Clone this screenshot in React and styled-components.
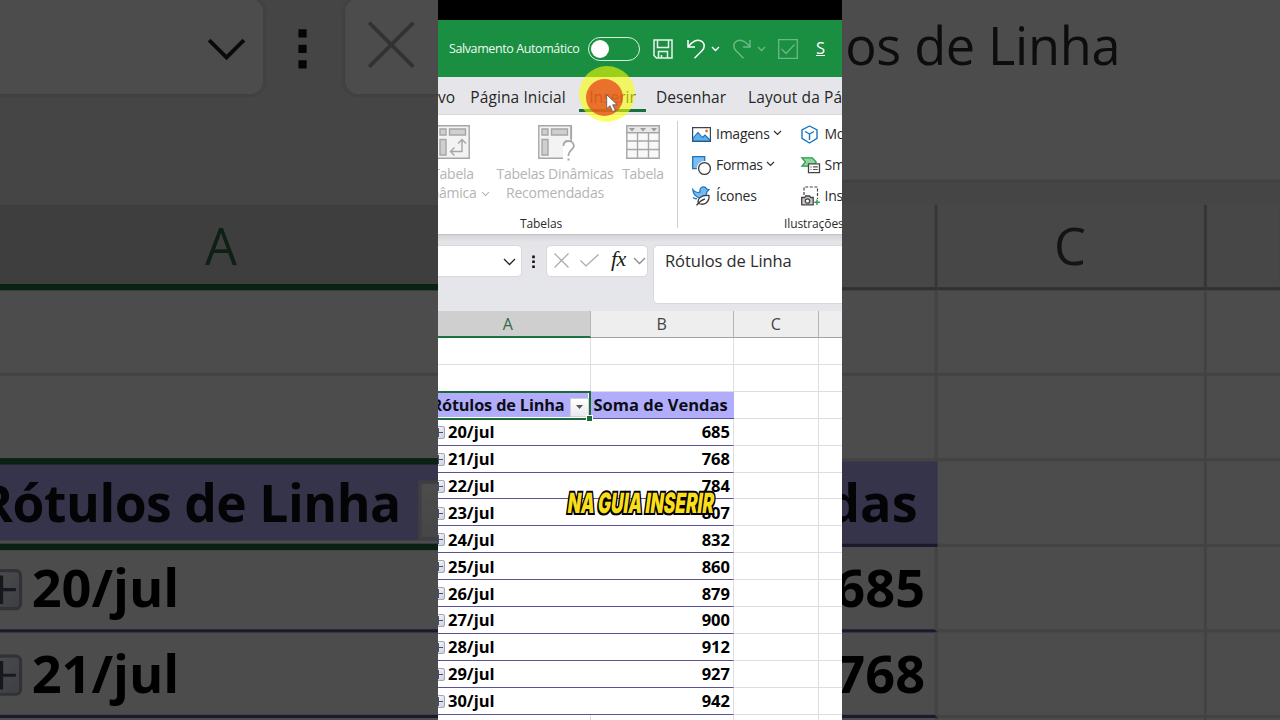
import React from "react";
import styled, { createGlobalStyle, css } from "styled-components";

const GlobalStyle = createGlobalStyle`
  * {
    box-sizing: border-box;
  }
  body {
    margin: 0;
    background: #000;
    font-family: "Open Sans", "Noto Sans", sans-serif;
    overflow: hidden;
  }
  svg {
    display: block;
    flex: none;
    overflow: visible;
  }
`;

const Stage = styled.div`
  display: grid;
  grid-template: 720px / 1280px;
  justify-items: center;
  overflow: hidden;
`;

const Backdrop = styled.div`
  grid-area: 1 / 1;
  width: 1280px;
  height: 720px;
  overflow: hidden;
  filter: brightness(0.3);
`;

const Magnified = styled.div`
  width: 404px;
  margin-top: -36px;
  background: #e5e6e9;
  transform: scale(3.168);
  transform-origin: 0 0;
`;

const Video = styled.div`
  grid-area: 1 / 1;
  position: relative;
  display: flex;
  flex-direction: column;
  width: 404px;
  height: 720px;
  overflow: hidden;
  background: #fff;
`;

const Letterbox = styled.div`
  flex: none;
  height: 20px;
  background: #000;
`;

const Text = styled.span`
  flex: none;
  white-space: nowrap;
  line-height: 1;
  font-size: ${(p) => p.$size}px;
  font-weight: ${(p) => p.$weight || 400};
  letter-spacing: ${(p) => p.$track || 0}px;
  color: ${(p) => p.$color || "#262626"};
`;

/* ---------- title bar ---------- */

const TitleBar = styled.div`
  flex: none;
  display: flex;
  align-items: center;
  height: 57px;
  padding-left: 11px;
  background: #1a8f42;
`;

const AutoSave = styled.div`
  flex: none;
  display: flex;
  width: 138.5px;
  padding-top: 1px;
`;

const Toggle = styled.div`
  flex: none;
  width: 52px;
  height: 24px;
  margin-right: 13px;
  padding: 2px;
  border: 1.5px solid #d9f0df;
  border-radius: 12px;
  &::before {
    content: "";
    display: block;
    width: 18px;
    height: 18px;
    border-radius: 50%;
    background: #fff;
  }
`;

const QuickAction = styled.div`
  flex: none;
  display: flex;
  width: ${(p) => p.$width}px;
  opacity: ${(p) => (p.$disabled ? 0.36 : 1)};
`;

const StrikeButton = styled(Text)`
  padding-bottom: 1px;
  line-height: 13px;
  border-bottom: 1.5px solid #fff;
`;

/* ---------- tabs ---------- */

const TabBar = styled.div`
  flex: none;
  display: flex;
  height: 38px;
  background: #e6e6ea;
  border-bottom: 1px solid #d8d8dc;
`;

const Tab = styled.div`
  flex: none;
  display: flex;
  align-items: center;
  justify-content: ${(p) => p.$align || "center"};
  width: ${(p) => p.$width}px;
  height: 35px;
  padding: 9px ${(p) => p.$right || 0}px 0 ${(p) => p.$left || 0}px;
  border-bottom: 3px solid ${(p) => (p.$active ? "#18703a" : "transparent")};
`;

/* ---------- ribbon ---------- */

const RibbonBar = styled.div`
  flex: none;
  display: flex;
  height: 120px;
  padding-top: 6px;
  background: #fff;
  border-bottom: 1px solid #c4c4c8;
`;

const Group = styled.div`
  flex: none;
  display: flex;
  flex-direction: column;
  width: ${(p) => p.$width}px;
  height: 107px;
  border-right: ${(p) => (p.$divided ? "1px solid #cfcfcf" : "none")};
`;

const GroupLabel = styled.div`
  margin-top: auto;
  padding: 2px 0 0 ${(p) => p.$indent}px;
  height: 12px;
  display: flex;
  align-items: flex-start;
`;

const BigButtons = styled.div`
  display: flex;
  padding-top: 4px;
  margin-left: -28px;
`;

const BigButton = styled.div`
  flex: none;
  display: flex;
  flex-direction: column;
  align-items: center;
  width: ${(p) => p.$width}px;
`;

const BigLine = styled.div`
  display: flex;
  align-items: center;
  gap: 5px;
  height: 19.5px;
`;

const BigIcon = styled.div`
  height: 39px;
`;

const SmallColumns = styled.div`
  display: grid;
  grid-template-columns: 108.5px 56px;
  grid-auto-rows: 31px;
  padding-left: 14px;
  margin-top: -2.5px;
`;

const SmallButton = styled.div`
  display: flex;
  align-items: center;
  span + svg {
    margin: -2px 0 0 4px;
  }
`;

const SmallIcon = styled.div`
  flex: none;
  width: 24px;
`;

/* ---------- formula bar ---------- */

const FormulaBar = styled.div`
  flex: none;
  display: flex;
  align-items: flex-start;
  height: 76px;
  padding-top: 10px;
  background: linear-gradient(#d4d4d8, #e5e5e9 7px, #e5e6e9);
`;

const box = css`
  flex: none;
  display: flex;
  align-items: center;
  height: 32px;
  background: #fff;
  border: 1px solid #d8d8dc;
`;

const NameBox = styled.div`
  ${box}
  width: 83.5px;
  border-left: none;
  border-radius: 0 5px 5px 0;
  justify-content: flex-end;
  padding: 1px 6px 0 0;
`;

const Dots = styled.div`
  flex: none;
  display: flex;
  justify-content: center;
  width: 24.5px;
  padding-top: 9.5px;
`;

const EditBox = styled.div`
  ${box}
  width: 102px;
  border-radius: 5px;
  padding: 0 0 1px 6.5px;
`;

const Fx = styled.span`
  margin: -3px 0 0 12px;
  width: 23px;
  font: italic 22px/1 "Liberation Serif", serif;
  letter-spacing: -0.5px;
  color: #1c1c1c;
`;

const FormulaInput = styled.div`
  ${box}
  align-items: flex-start;
  width: 200px;
  height: 59px;
  margin-left: 5px;
  padding: 6.7px 0 0 11px;
  border-radius: 5px;
`;

/* ---------- sheet ---------- */

const Grid = styled.div`
  flex: none;
  display: grid;
  grid-template-columns: 152.5px 143.5px 84.5px 24px;
  grid-auto-rows: 26.92px;
  grid-template-rows: 27px;
  background: #fff;
`;

const ColumnHead = styled.div`
  display: flex;
  align-items: center;
  justify-content: center;
  padding: ${(p) => (p.$active ? "1.5px 12px 0 0" : "0.5px 0 0")};
  background: ${(p) => (p.$active ? "#cfcfcf" : "#eeeeee")};
  border-right: 1px solid #b5b5b5;
  border-bottom: ${(p) => (p.$active ? "2px solid #1f7040" : "1px solid #a3a3a3")};
`;

const Cell = styled.div`
  display: flex;
  align-items: center;
  min-width: 0;
  border-right: 1px solid #dedee0;
  border-bottom: 1px solid #dedee0;
`;

const PivotCell = styled(Cell)`
  justify-content: ${(p) => (p.$number ? "flex-end" : "flex-start")};
  padding: 1.4px ${(p) => (p.$number ? 3 : 0)}px 0 0;
  border-right: ${(p) => (p.$number ? "1px solid #dedee0" : "none")};
  border-bottom-color: #5a5296;
`;

const PivotHead = styled(PivotCell)`
  padding: 0 0 0 3px;
  background: #b1adfb;
`;

const SelectedHead = styled(PivotHead)`
  position: relative;
  z-index: 1;
  justify-content: flex-end;
  padding: 0;
  margin: -1px -0.5px -1px 0;
  border: 2px solid #1d6a3c;
  border-left: none;
  box-shadow: inset 0 -1px #fff, inset -1px 0 #fff;
`;

const FilterButton = styled.div`
  flex: none;
  align-self: flex-end;
  display: flex;
  align-items: center;
  justify-content: center;
  width: 19.5px;
  height: 19px;
  margin: 0 0 1px 5px;
  background: linear-gradient(#fff, #e9eaf0);
  border: 1px solid #d2d2dc;
`;

const FillHandle = styled.div`
  position: absolute;
  right: -3px;
  bottom: -3px;
  width: 5px;
  height: 5px;
  background: #1d6a3c;
  outline: 1px solid #fff;
`;

const Expander = styled.div`
  flex: none;
  display: grid;
  place-items: center;
  width: 12px;
  height: 13px;
  margin: 0 3.5px 0 -5.5px;
  background: linear-gradient(135deg, #fff, #ccd1e2);
  border: 1px solid #a3a8b6;
  border-radius: 2px;
`;

/* ---------- overlays ---------- */

const Halo = styled.div`
  position: absolute;
  left: 141px;
  top: 66px;
  width: 56px;
  height: 56px;
  border-radius: 50%;
  background: rgba(250, 255, 0, 0.58);
`;

const ClickDot = styled.div`
  position: absolute;
  left: 148px;
  top: 79px;
  width: 37px;
  height: 37px;
  border-radius: 50%;
  background: rgba(230, 66, 26, 0.74);
`;

const Pointer = styled.div`
  position: absolute;
  left: 168px;
  top: 94px;
`;

const Caption = styled.div`
  position: absolute;
  left: 130px;
  top: 488px;
  font: 900 28px/30px Inter, sans-serif;
  white-space: nowrap;
  color: #f9de1c;
  -webkit-text-stroke: 4px #000;
  paint-order: stroke fill;
  transform: scaleX(0.615) skewX(-12deg);
  transform-origin: 0 50%;
  text-shadow: -2px 2px #000, 2px 2px #000;
`;

const Chevron = ({ width = 8, color = "#333", stroke = 1.2 }) => (
  <svg width={width} height={width / 2} viewBox="0 0 8 4">
    <path d="M0 0 4 4 8 0" fill="none" stroke={color} strokeWidth={stroke} />
  </svg>
);

const SaveIcon = () => (
  <svg width="20" height="20" viewBox="0 0 20 20" fill="none" stroke="#e6f6ea" strokeWidth="1.5">
    <path d="M1 1h18v18H3.5L1 16.5z" />
    <path d="M4.5 1v7.500h11V1M5.500 19v-6.500h9V19M8.500 19v-3" />
  </svg>
);

const UndoIcon = () => (
  <svg width="18" height="20" viewBox="0 0 18 20" fill="none" stroke="#fff" strokeWidth="1.5">
    <path d="M1 1v7h7M1.200 7.800C4 4 7 1.200 11 1.200c4 0 6.200 3 6.200 5.800 0 2-.8 3.400-2.200 4.800L7.500 19.300" />
  </svg>
);

const RedoIcon = () => (
  <svg width="18" height="20" viewBox="0 0 18 20" fill="none" stroke="#fff" strokeWidth="1.5">
    <path d="M17 1v7h-7M16.800 7.800C14 4 11 1.200 7 1.200 3 1.200.8 4.200.8 7c0 2 .8 3.400 2.200 4.800l7.500 7.500" />
  </svg>
);

const CheckBoxIcon = () => (
  <svg width="20" height="20" viewBox="0 0 20 20" fill="none" stroke="#fff" strokeWidth="1.3">
    <path d="M.7.700h18.600v18.600H.7zM3.500 10l4.500 4.500 8.500-9" />
  </svg>
);

const PivotBase = () => (
  <>
    <path d="M.8.800h32.400v32.400H.8z" fill="#f3f3f3" />
    <path d="M4 4h6v6H4zM13.500 4h16v6h-16zM4 14.500h6V30H4z" fill="#cfcfcf" />
  </>
);

const PivotIcon = () => (
  <svg width="34" height="34" viewBox="0 0 34 34" fill="none" stroke="#a6a6a6" strokeWidth="1.4">
    <PivotBase />
    <path d="M26 15v11.500H15M22 18.500l4-4 4 4M18.500 22.500l-4 4 4 4" />
  </svg>
);

const PivotHelpIcon = () => (
  <svg width="34" height="34" viewBox="0 0 34 34" fill="none" stroke="#a6a6a6" strokeWidth="1.4">
    <PivotBase />
    <path d="M25 16h10v19H25z" fill="#fff" stroke="none" />
    <path d="M33.200.8V14M25.500 21c0-3 2-5 5-5s5.300 2 5.300 5c0 3.500-5.300 4.500-5.300 9v1" strokeWidth="1.8" />
    <path d="M30.500 33.500v2" strokeWidth="2" />
  </svg>
);

const TableIcon = () => (
  <svg width="34" height="34" viewBox="0 0 34 34" fill="none" stroke="#a6a6a6" strokeWidth="1.4">
    <path d="M.8.800h32.400v32.400H.8z" fill="#f8f8f8" />
    <path d="M.8.800h32.400v7H.8z" fill="#e6e6e6" />
    <path d="M.8 16h32.400M.8 24.500h32.400M11.500 8v25M22.500 8v25" />
    <path d="m3 3 3 3.500L9 3zM14 3l3 3.500L20 3zM25 3l3 3.500L31 3z" fill="#9b9b9b" stroke="none" />
  </svg>
);

const PictureIcon = () => (
  <svg width="19" height="15" viewBox="0 0 19 15">
    <path d="M.6.600h17.800v13.800H.6z" fill="#fff" stroke="#3b4450" strokeWidth="1.2" />
    <path d="M1 11 6 5.500l4.500 5L13 8l5 5v1H1z" fill="#5fb0ea" stroke="#1b6fb5" strokeWidth="1.1" />
    <circle cx="14.5" cy="4" r="1.4" fill="#e2702c" />
  </svg>
);

const ShapesIcon = () => (
  <svg width="19" height="19" viewBox="0 0 19 19">
    <path d="M.7.700h12v12H.7z" fill="#7fbdf0" stroke="#1b75bc" strokeWidth="1.3" />
    <circle cx="12.5" cy="12.5" r="7.6" fill="#fff" />
    <circle cx="12.5" cy="12.5" r="5.9" fill="#fff" stroke="#3a3a3a" strokeWidth="1.3" />
  </svg>
);

const IconsIcon = () => (
  <svg width="19" height="20" viewBox="0 0 19 20">
    <path
      d="M.8 3.500C2.500 6 5.500 7 8 6 7.300 3 9 .8 11.500.8c1.800 0 2.700 1 3 2.300l2.500.5-2 2.200c-.3 3-2 5-4.500 6C6.500 13 1 9.500.8 3.500z"
      fill="#74b8ee"
      stroke="#1b75bc"
      strokeWidth="1.2"
    />
    <path d="M1 11.500c1 1 2.500 1.500 4 1.200" fill="none" stroke="#1b75bc" strokeWidth="1.2" />
    <path
      d="M6.500 17.500C5 13 8.500 9 17 9.500c.5 6-4 10.500-10.500 8z"
      fill="#fff"
      stroke="#3a3a3a"
      strokeWidth="1.3"
    />
    <path d="M4.500 19.300C7 16 9.500 14 13 12.800" fill="none" stroke="#3a3a3a" strokeWidth="1.3" />
  </svg>
);

const CubeIcon = () => (
  <svg width="17" height="19" viewBox="0 0 17 19" fill="#fff" stroke="#1b75bc" strokeWidth="1.4" strokeLinejoin="round">
    <path d="M8.500 1 16 4.800v8.600L8.500 18 1 13.400V4.800z" />
    <path d="M4 6.500 8.500 9v6M8.500 9l4.500-2.500" fill="none" />
  </svg>
);

const SmartArtIcon = () => (
  <svg width="19" height="17" viewBox="0 0 19 17">
    <path d="M.8.800h10.500l4 4.200-3.500 4.200H.8L4.500 5z" fill="#8ed6a0" stroke="#2b9a4d" strokeWidth="1.2" />
    <path d="M7.500 6.800h11v8.800h-11z" fill="#fff" stroke="#444" strokeWidth="1.3" />
    <path d="M9.500 9.800h1M12 9.800h4.800M9.500 12.500h1M12 12.500h4.800" stroke="#555" strokeWidth="1.2" />
  </svg>
);

const ScreenshotIcon = () => (
  <svg width="19" height="20" viewBox="0 0 19 20" fill="none">
    <path d="M3 9V1h13.500v12" stroke="#444" strokeWidth="1.2" strokeDasharray="3 1.6" />
    <path d="M.7 11.500h3l1-1.500h4l1 1.500h2.500v7.300H.7z" fill="#c9c9c9" stroke="#444" strokeWidth="1.3" />
    <circle cx="6.5" cy="15" r="2.2" fill="#fff" stroke="#444" strokeWidth="1.3" />
    <path d="M16 13.500v5.500M13.300 16.200h5.500" stroke="#2b9a4d" strokeWidth="1.4" />
  </svg>
);

const CancelIcon = styled.svg`
  margin-right: 11.5px;
`;

const INK = "#2b2b2b";
const MUTED = "#b4b4b4";

const Formula = () => (
  <FormulaBar>
    <NameBox>
      <Chevron width={11} color="#222" stroke={0.9} />
    </NameBox>
    <Dots>
      <svg width="3" height="14" viewBox="0 0 3 14">
        <path d="M.2.600h2.600v2.600H.2zM.2 5.500h2.600v2.600H.2zM.2 10.400h2.600V13H.2z" fill="#111" />
      </svg>
    </Dots>
    <EditBox>
      <CancelIcon width="15" height="15" viewBox="0 0 15 15">
        <path d="m.5.500 14 14m0-14-14 14" stroke="#a8a8a8" strokeWidth="1.2" />
      </CancelIcon>
      <svg width="19" height="13" viewBox="0 0 19 13">
        <path d="m.5 6.500 5.500 5.500L18.500.500" fill="none" stroke="#a8a8a8" strokeWidth="1.2" />
      </svg>
      <Fx>fx</Fx>
      <Chevron width={11} color="#8a8a8a" stroke={0.9} />
    </EditBox>
    <FormulaInput>
      <Text $size={16.5} $track={-0.1} $color={INK}>Rótulos de Linha</Text>
    </FormulaInput>
  </FormulaBar>
);

const SALES = [
  ["20/jul", 685],
  ["21/jul", 768],
  ["22/jul", 784],
  ["23/jul", 807],
  ["24/jul", 832],
  ["25/jul", 860],
  ["26/jul", 879],
  ["27/jul", 900],
  ["28/jul", 912],
  ["29/jul", 927],
  ["30/jul", 942],
];

const Blank = ({ count }) => Array.from({ length: count }, (_, i) => <Cell key={i} />);

const Sheet = ({ rows }) => (
  <Grid>
    <ColumnHead $active>
      <Text $size={16} $color="#2f6b47">A</Text>
    </ColumnHead>
    <ColumnHead>
      <Text $size={16} $color="#444">B</Text>
    </ColumnHead>
    <ColumnHead>
      <Text $size={16} $color="#444">C</Text>
    </ColumnHead>
    <ColumnHead />
    <Blank count={8} />
    <SelectedHead>
      <Text $size={16.3} $track={-0.15} $weight={700} $color="#0d0d16">Rótulos de Linha</Text>
      <FilterButton>
        <svg width="7" height="4" viewBox="0 0 7 4">
          <path d="M0 0h7L3.500 4z" fill="#555" />
        </svg>
      </FilterButton>
      <FillHandle />
    </SelectedHead>
    <PivotHead>
      <Text $size={16.5} $weight={700} $color="#0d0d16">Soma de Vendas</Text>
    </PivotHead>
    <Blank count={2} />
    {rows.map(([day, total]) => (
      <React.Fragment key={day}>
        <PivotCell>
          <Expander>
            <svg width="9" height="9" viewBox="0 0 9 9">
              <path d="M0 4.500h9M4.500 0v9" stroke="#4a5068" strokeWidth="1" />
            </svg>
          </Expander>
          <Text $size={16.5} $weight={700} $color="#000">{day}</Text>
        </PivotCell>
        <PivotCell $number>
          <Text $size={16.5} $weight={700} $color="#000">{total}</Text>
        </PivotCell>
        <Blank count={2} />
      </React.Fragment>
    ))}
    <Blank count={4} />
  </Grid>
);

const Ribbon = () => (
  <RibbonBar>
    <Group $width={240} $divided>
      <BigButtons>
        <BigButton $width={86}>
          <BigIcon>
            <PivotIcon />
          </BigIcon>
          <BigLine>
            <Text $size={14} $track={-0.25} $color={MUTED}>Tabela</Text>
          </BigLine>
          <BigLine>
            <Text $size={14} $track={-0.25} $color={MUTED}>Dinâmica</Text>
            <Chevron width={7} color="#aaa" />
          </BigLine>
        </BigButton>
        <BigButton $width={118}>
          <BigIcon>
            <PivotHelpIcon />
          </BigIcon>
          <BigLine>
            <Text $size={14} $track={-0.25} $color={MUTED}>Tabelas Dinâmicas</Text>
          </BigLine>
          <BigLine>
            <Text $size={14} $track={-0.2} $color={MUTED}>Recomendadas</Text>
          </BigLine>
        </BigButton>
        <BigButton $width={58}>
          <BigIcon>
            <TableIcon />
          </BigIcon>
          <BigLine>
            <Text $size={14} $track={-0.25} $color={MUTED}>Tabela</Text>
          </BigLine>
        </BigButton>
      </BigButtons>
      <GroupLabel $indent={82}>
        <Text $size={12} $track={-0.1} $color={INK}>Tabelas</Text>
      </GroupLabel>
    </Group>
    <Group $width={164}>
      <SmallColumns>
        <SmallButton>
          <SmallIcon><PictureIcon /></SmallIcon>
          <Text $size={14} $track={-0.25} $color={INK}>Imagens</Text>
          <Chevron width={7} stroke={1.4} />
        </SmallButton>
        <SmallButton>
          <SmallIcon><CubeIcon /></SmallIcon>
          <Text $size={14} $track={-0.25} $color={INK}>Mo</Text>
        </SmallButton>
        <SmallButton>
          <SmallIcon><ShapesIcon /></SmallIcon>
          <Text $size={14} $track={-0.35} $color={INK}>Formas</Text>
          <Chevron width={7} stroke={1.4} />
        </SmallButton>
        <SmallButton>
          <SmallIcon><SmartArtIcon /></SmallIcon>
          <Text $size={14} $track={-0.25} $color={INK}>Sm</Text>
        </SmallButton>
        <SmallButton>
          <SmallIcon><IconsIcon /></SmallIcon>
          <Text $size={14} $track={-0.25} $color={INK}>Ícones</Text>
        </SmallButton>
        <SmallButton>
          <SmallIcon><ScreenshotIcon /></SmallIcon>
          <Text $size={14} $track={-0.25} $color={INK}>Ins</Text>
        </SmallButton>
      </SmallColumns>
      <GroupLabel $indent={106}>
        <Text $size={12} $track={-0.1} $color={INK}>Ilustrações</Text>
      </GroupLabel>
    </Group>
  </RibbonBar>
);

export default function App() {
  return (
    <Stage>
      <GlobalStyle />
      <Backdrop aria-hidden="true">
        <Magnified>
          <Formula />
          <Sheet rows={SALES.slice(0, 2)} />
        </Magnified>
      </Backdrop>
      <Video>
        <Letterbox />
        <TitleBar>
          <AutoSave>
            <Text $size={12.5} $track={-0.4} $color="#eefaf1">Salvamento Automático</Text>
          </AutoSave>
          <Toggle />
          <QuickAction $width={34.5}><SaveIcon /></QuickAction>
          <QuickAction $width={25}><UndoIcon /></QuickAction>
          <QuickAction $width={21}><Chevron width={7} color="#fff" stroke={1.6} /></QuickAction>
          <QuickAction $width={25} $disabled><RedoIcon /></QuickAction>
          <QuickAction $width={19.5} $disabled><Chevron width={7} color="#fff" stroke={1.6} /></QuickAction>
          <QuickAction $width={38.5} $disabled><CheckBoxIcon /></QuickAction>
          <StrikeButton $size={16.5} $color="#fff">S</StrikeButton>
        </TitleBar>
        <TabBar>
          <Tab $width={19} $right={2} $align="flex-end"><Text $size={15.5}>vo</Text></Tab>
          <Tab $width={122}><Text $size={15.5} $track={0.1}>Página Inicial</Text></Tab>
          <Tab $width={67} $active><Text $size={15.5} $color="#1d2a1f">Inserir</Text></Tab>
          <Tab $width={90}><Text $size={15.5}>Desenhar</Text></Tab>
          <Tab $width={106} $left={12} $align="flex-start"><Text $size={15.5} $track={0.1}>Layout da Pá</Text></Tab>
        </TabBar>
        <Ribbon />
        <Formula />
        <Sheet rows={SALES} />
        <Halo />
        <ClickDot />
        <Pointer>
          <svg width="13" height="19" viewBox="0 0 13 19">
            <path d="M.7.700v14l3.300-3 2.600 6 2.700-1.200-2.600-5.700h4.600z" fill="#fff" stroke="#555" strokeWidth=".8" />
          </svg>
        </Pointer>
        <Caption>NA GUIA INSERIR</Caption>
      </Video>
    </Stage>
  );
}
